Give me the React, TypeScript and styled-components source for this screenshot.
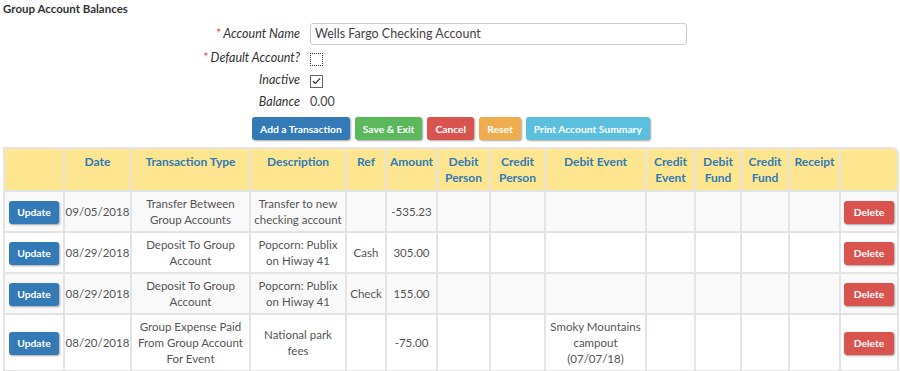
import { createGlobalStyle, styled } from 'styled-components';

const GlobalStyle = createGlobalStyle`
  body {
    margin: 0;
    background: #fff;
    font-family: Lato, "Open Sans", sans-serif;
    color: #555;
  }
`;

const Page = styled.div`
  width: 896px;
  padding: 0 1px 0 3px;
`;

const Title = styled.h3`
  margin: 0;
  padding-top: 2px;
  height: 20px;
  font-size: 11.5px;
  font-weight: 700;
  color: #333;
`;

const Form = styled.div`
  display: grid;
  grid-template-columns: 297px 377px;
  column-gap: 10px;
  grid-auto-rows: 22px;
  align-items: center;
  margin-top: 2px;
`;

const Label = styled.div<{ $first?: boolean }>`
  text-align: right;
  font-size: 12.5px;
  font-style: italic;
  color: #333;
  margin-bottom: ${({ $first }) => ($first ? '3px' : '0')};
`;

const Req = styled.span`
  color: #d9534f;
  font-style: normal;
  margin-right: 2px;
`;

const TextInput = styled.input`
  box-sizing: border-box;
  width: 377px;
  height: 22px;
  margin-bottom: 3px;
  border: 1px solid #ccc;
  border-radius: 3px;
  padding: 0 4px;
  font-family: inherit;
  font-size: 12.5px;
  color: #444;
`;

const Check = styled.span<{ $focus?: boolean }>`
  box-sizing: border-box;
  display: inline-flex;
  align-items: center;
  justify-content: center;
  width: 13px;
  height: 13px;
  border: 1px ${({ $focus }) => ($focus ? 'dotted #333' : 'solid #666')};
  background: #fff;
  vertical-align: middle;
`;

const Value = styled.div`
  font-size: 12.5px;
  color: #444;
`;

const ButtonBar = styled.div`
  display: flex;
  justify-content: center;
  gap: 5px;
  margin-top: 5px;
  margin-bottom: 7px;
`;

const colors: Record<string, string> = {
  primary: '#337ab7',
  success: '#5cb85c',
  danger: '#d9534f',
  warning: '#f0ad4e',
  info: '#5bc0de',
};

const Button = styled.button<{ $kind: string }>`
  height: 23px;
  padding: 0 8px;
  border: none;
  border-radius: 3px;
  background: ${({ $kind }) => colors[$kind]};
  color: #fff;
  font-family: inherit;
  font-size: 10.3px;
  font-weight: 700;
  box-shadow: 1px 1px 2px rgba(0, 0, 0, 0.35);
  cursor: pointer;
`;

const RowButton = styled(Button)`
  width: 50px;
  padding: 0;
`;

const Table = styled.table`
  width: 896px;
  table-layout: fixed;
  border-collapse: separate;
  border-spacing: 0;
  font-size: 11.5px;
`;

const Th = styled.th`
  background: #fde68f;
  color: #337ab7;
  font-size: 12px;
  font-weight: 700;
  line-height: 16px;
  vertical-align: top;
  white-space: nowrap;
  padding: 5px 0 4px;
  border-top: 2px solid #e4e4e4;
  border-right: 2px solid #e4e4e4;
  border-bottom: 2px solid #e4e4e4;
  &:first-child {
    border-left: 2px solid #e4e4e4;
  }
  &:last-child {
    border-top-right-radius: 7px;
  }
`;

const Tr = styled.tr<{ $alt: boolean }>`
  background: ${({ $alt }) => ($alt ? '#f9f9f9' : '#fff')};
`;

const Td = styled.td`
  text-align: center;
  vertical-align: middle;
  line-height: 16px;
  white-space: nowrap;
  padding: 4px 0 3px;
  color: #555;
  border-right: 2px solid #e4e4e4;
  border-bottom: 2px solid #e4e4e4;
  &:first-child {
    border-left: 2px solid #e4e4e4;
  }
`;

const CheckMark = () => (
  <svg width="9" height="8" viewBox="0 0 9 8">
    <path d="M1 4.2 L3.4 6.5 L8 1.3" fill="none" stroke="#333" strokeWidth="1.2" />
  </svg>
);

const widths = [62, 67, 119, 96, 40, 51, 53, 55, 101, 49, 46, 48, 51, 58];

const headers: React.ReactNode[] = [
  '',
  'Date',
  'Transaction Type',
  'Description',
  'Ref',
  'Amount',
  <>Debit<br />Person</>,
  <>Credit<br />Person</>,
  'Debit Event',
  <>Credit<br />Event</>,
  <>Debit<br />Fund</>,
  <>Credit<br />Fund</>,
  'Receipt',
  '',
];

type Txn = {
  date: string;
  type: React.ReactNode;
  desc: React.ReactNode;
  ref: string;
  amount: string;
  debitEvent?: React.ReactNode;
};

const rows: Txn[] = [
  {
    date: '09/05/2018',
    type: <>Transfer Between<br />Group Accounts</>,
    desc: <>Transfer to new<br />checking account</>,
    ref: '',
    amount: '-535.23',
  },
  {
    date: '08/29/2018',
    type: <>Deposit To Group<br />Account</>,
    desc: <>Popcorn: Publix<br />on Hiway 41</>,
    ref: 'Cash',
    amount: '305.00',
  },
  {
    date: '08/29/2018',
    type: <>Deposit To Group<br />Account</>,
    desc: <>Popcorn: Publix<br />on Hiway 41</>,
    ref: 'Check',
    amount: '155.00',
  },
  {
    date: '08/20/2018',
    type: <>Group Expense Paid<br />From Group Account<br />For Event</>,
    desc: <>National park<br />fees</>,
    ref: '',
    amount: '-75.00',
    debitEvent: <>Smoky Mountains<br />campout<br />(07/07/18)</>,
  },
];

export default function App() {
  return (
    <Page>
      <GlobalStyle />
      <Title>Group Account Balances</Title>
      <Form>
        <Label $first><Req>*</Req>Account Name</Label>
        <TextInput defaultValue="Wells Fargo Checking Account" />
        <Label><Req>*</Req>Default Account?</Label>
        <div><Check $focus /></div>
        <Label>Inactive</Label>
        <div><Check><CheckMark /></Check></div>
        <Label>Balance</Label>
        <Value>0.00</Value>
      </Form>
      <ButtonBar>
        <Button $kind="primary">Add a Transaction</Button>
        <Button $kind="success">Save &amp; Exit</Button>
        <Button $kind="danger">Cancel</Button>
        <Button $kind="warning">Reset</Button>
        <Button $kind="info">Print Account Summary</Button>
      </ButtonBar>
      <Table>
        <colgroup>
          {widths.map((w, i) => (
            <col key={i} style={{ width: w }} />
          ))}
        </colgroup>
        <thead>
          <tr>
            {headers.map((h, i) => (
              <Th key={i}>{h}</Th>
            ))}
          </tr>
        </thead>
        <tbody>
          {rows.map((r, i) => (
            <Tr key={i} $alt={i % 2 === 0}>
              <Td><RowButton $kind="primary">Update</RowButton></Td>
              <Td>{r.date}</Td>
              <Td>{r.type}</Td>
              <Td>{r.desc}</Td>
              <Td>{r.ref}</Td>
              <Td>{r.amount}</Td>
              <Td />
              <Td />
              <Td>{r.debitEvent}</Td>
              <Td />
              <Td />
              <Td />
              <Td />
              <Td><RowButton $kind="danger">Delete</RowButton></Td>
            </Tr>
          ))}
        </tbody>
      </Table>
    </Page>
  );
}
